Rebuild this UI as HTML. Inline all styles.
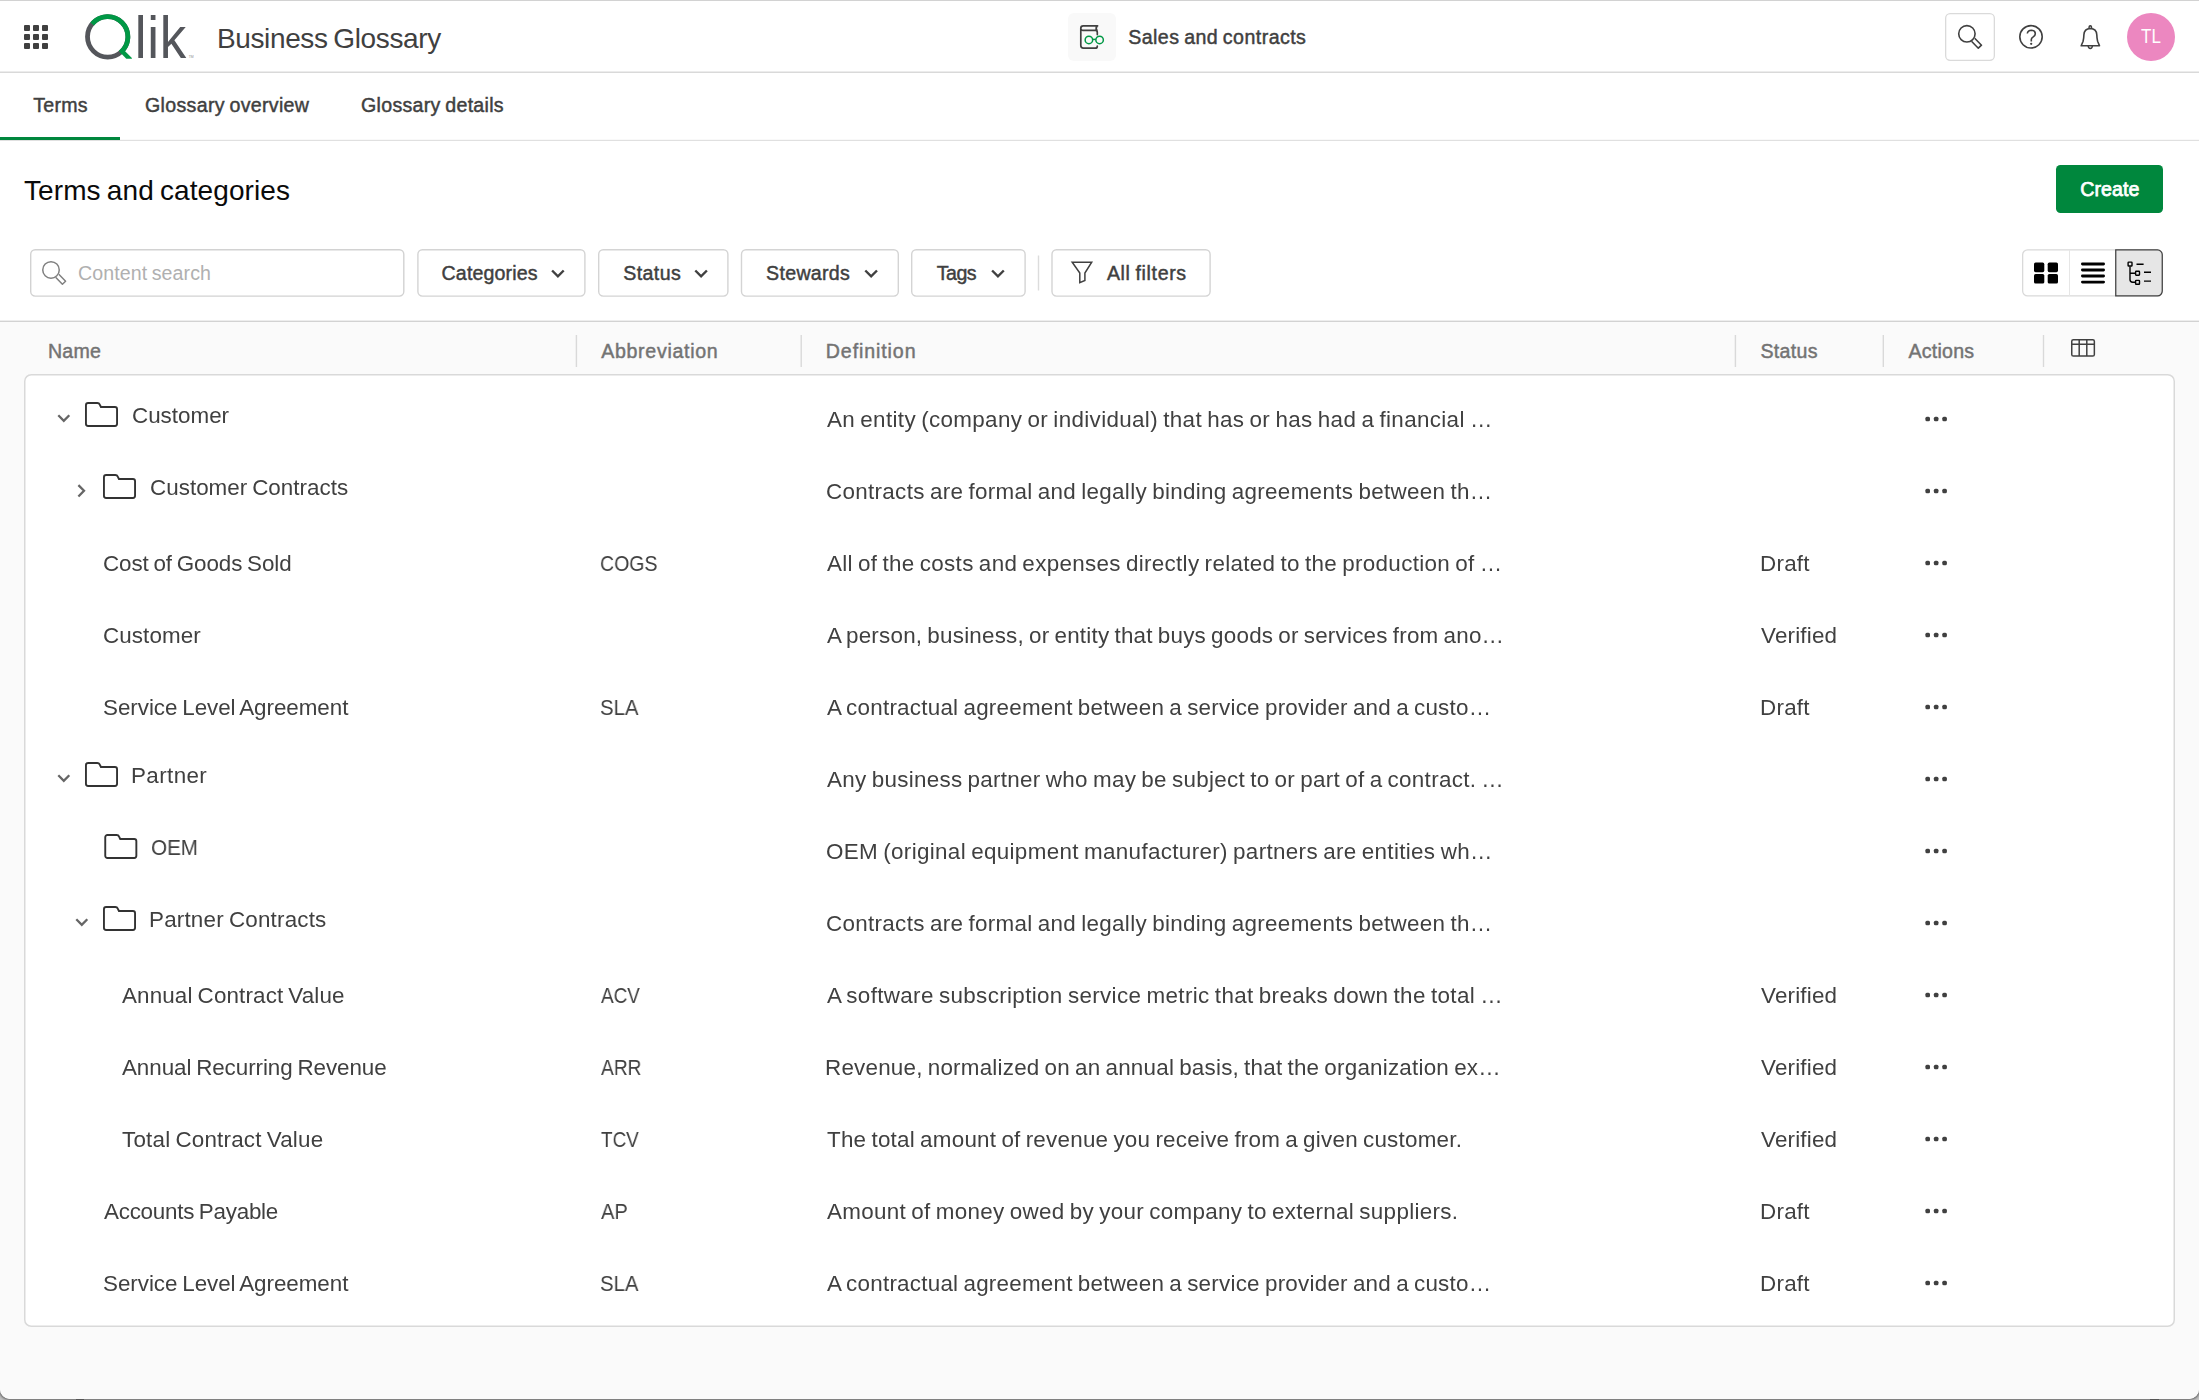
<!DOCTYPE html>
<html lang="en"><head><meta charset="utf-8"><title>Business Glossary</title>
<style>
html,body{margin:0;padding:0;}
body{width:2199px;height:1400px;overflow:hidden;background:#c2c2c2;font-family:'Liberation Sans',sans-serif;position:relative;}
#win{position:absolute;left:0;top:0;width:2199px;height:1398.5px;overflow:hidden;border-radius:0 0 10px 10px;background:#fafafa;box-shadow:0 0 2.5px 0.6px rgba(0,0,0,0.5);}
#bg{position:absolute;left:0;top:0;}
.t{position:absolute;line-height:40px;white-space:nowrap;}
.g{will-change:transform;}
#logo{position:absolute;left:0;top:0;}
</style></head><body>
<div id="win">
<svg id="bg" width="2199" height="1400" viewBox="0 0 2199 1400" role="img" aria-label="Qlik Business Glossary">
<rect x="0" y="0" width="2199" height="321" fill="#ffffff"/>
<rect x="0" y="321" width="2199" height="1079" fill="#fafafa"/>
<rect x="0" y="0" width="2199" height="1" fill="#d2d2d2"/>
<rect x="0" y="71.5" width="2199" height="1.5" fill="#d9d9d9"/>
<rect x="0" y="139.8" width="2199" height="1.1999999999999886" fill="#e0e0e0"/>
<rect x="0" y="137" width="120" height="3" fill="#00873d"/>
<rect x="0" y="320.6" width="2199" height="1.3999999999999773" fill="#d2d2d2"/>
<rect x="24" y="25" width="6" height="6" rx="1" fill="#404040"/>
<rect x="33" y="25" width="6" height="6" rx="1" fill="#404040"/>
<rect x="42" y="25" width="6" height="6" rx="1" fill="#404040"/>
<rect x="24" y="34" width="6" height="6" rx="1" fill="#404040"/>
<rect x="33" y="34" width="6" height="6" rx="1" fill="#404040"/>
<rect x="42" y="34" width="6" height="6" rx="1" fill="#404040"/>
<rect x="24" y="43" width="6" height="6" rx="1" fill="#404040"/>
<rect x="33" y="43" width="6" height="6" rx="1" fill="#404040"/>
<rect x="42" y="43" width="6" height="6" rx="1" fill="#404040"/>
<circle cx="107.7" cy="36.85" r="20.2" fill="none" stroke="#54565b" stroke-width="4.8"/>
<path d="M92.14 23.97 A20.2 20.2 0 1 1 120.41 52.55" fill="none" stroke="#009845" stroke-width="4.8"/>
<path d="M119.3 51.6 L124.9 51.1 L131.9 58.1 L131.9 58.8 L126.3 58.8 Z" fill="#009845"/>
<rect x="1068" y="13" width="48" height="48" rx="6" fill="#f9f9f9"/>
<path d="M1097.6 25.8 H1083.2 A2.4 2.4 0 0 0 1080.8 28.2 V45.6 A2.6 2.6 0 0 0 1083.4 48.2 H1095.3 A2 2 0 0 0 1097.3 46.2 M1080.8 28.2 A2.2 2.2 0 0 0 1083 30.4 H1095.3 A2 2 0 0 1 1097.3 32.4 V34.6 M1097.2 25.9 Q1095.2 28.1 1097 30.6" fill="none" stroke="#404040" stroke-width="1.7" stroke-linecap="round"/>
<circle cx="1088.9" cy="39.9" r="3.75" fill="none" stroke="#009845" stroke-width="1.5"/><circle cx="1099.6" cy="39.9" r="3.75" fill="none" stroke="#009845" stroke-width="1.5"/><path d="M1092.7 39.4 H1095.8" stroke="#009845" stroke-width="1.5"/>
<rect x="1945.65" y="13.65" width="48.70" height="46.70" rx="4.5" fill="#ffffff" stroke="#dadada" stroke-width="1.3"/>
<circle cx="1966.9" cy="33.8" r="8.2" fill="none" stroke="#404040" stroke-width="1.6"/>
<path d="M1971.5 41.199999999999996 L1978.3000000000002 48.199999999999996 L1981.5 45.199999999999996 L1974.7 38.199999999999996" fill="none" stroke="#404040" stroke-width="1.6" stroke-linejoin="round"/>
<circle cx="2031" cy="36.8" r="11.2" fill="none" stroke="#404040" stroke-width="1.6"/>
<path d="M2027.3 33.5 Q2027.8 30.2 2031.4 30.2 Q2035.3 30.3 2035.3 33.7 Q2035.3 35.5 2033.2 36.9 Q2031.3 38.1 2031.3 39.6 V41.4" fill="none" stroke="#404040" stroke-width="1.6"/><circle cx="2031.2" cy="43.8" r="1.15" fill="#404040"/>
<path d="M2081.2 45.7 H2099.5 L2097.6 41.2 Q2096.9 38.5 2096.8 34.8 Q2096.5 28.6 2090.35 28.5 Q2084.2 28.6 2083.9 34.8 Q2083.8 38.5 2083.1 41.2 Z" fill="none" stroke="#404040" stroke-width="1.6" stroke-linejoin="round"/>
<path d="M2089 28.4 Q2089 25.7 2090.3 25.7 Q2091.6 25.7 2091.6 28.4 M2088.2 46 Q2088.4 48.4 2090.3 48.4 Q2092.2 48.4 2092.4 46" fill="none" stroke="#404040" stroke-width="1.5"/>
<circle cx="2151" cy="37" r="24" fill="#ec87c0"/>
<rect x="2056" y="165" width="107" height="48" rx="4.5" fill="#00873d"/>
<rect x="30.70" y="249.70" width="373.10" height="46.40" rx="4.5" fill="#ffffff" stroke="#d2d2d2" stroke-width="1.4"/>
<circle cx="51" cy="269.9" r="8.25" fill="none" stroke="#808080" stroke-width="1.5"/>
<path d="M55.6 277.29999999999995 L62.4 284.29999999999995 L65.6 281.29999999999995 L58.8 274.29999999999995" fill="none" stroke="#808080" stroke-width="1.5" stroke-linejoin="round"/>
<rect x="417.90" y="249.70" width="167.00" height="46.40" rx="4.5" fill="#ffffff" stroke="#d4d4d4" stroke-width="1.4"/>
<path d="M552.10 270.50 L557.90 276.30 L563.70 270.50" fill="none" stroke="#404040" stroke-width="2.4"/>
<rect x="598.70" y="249.70" width="129.20" height="46.40" rx="4.5" fill="#ffffff" stroke="#d4d4d4" stroke-width="1.4"/>
<path d="M695.30 270.50 L701.10 276.30 L706.90 270.50" fill="none" stroke="#404040" stroke-width="2.4"/>
<rect x="741.50" y="249.70" width="156.80" height="46.40" rx="4.5" fill="#ffffff" stroke="#d4d4d4" stroke-width="1.4"/>
<path d="M865.30 270.50 L871.15 276.35 L877.00 270.50" fill="none" stroke="#404040" stroke-width="2.4"/>
<rect x="911.70" y="249.70" width="113.40" height="46.40" rx="4.5" fill="#ffffff" stroke="#d4d4d4" stroke-width="1.4"/>
<path d="M992.10 270.50 L997.95 276.35 L1003.80 270.50" fill="none" stroke="#404040" stroke-width="2.4"/>
<rect x="1037.8" y="255.5" width="1.400000000000091" height="35.0" fill="#dcdcdc"/>
<rect x="1052.00" y="249.70" width="158.10" height="46.40" rx="4.5" fill="#ffffff" stroke="#d4d4d4" stroke-width="1.4"/>
<path d="M1072.2 262.2 H1091.7 L1084.9 273 V280.5 L1079.8 282.7 V273 Z" fill="none" stroke="#404040" stroke-width="1.5" stroke-linejoin="miter"/>
<rect x="2022.65" y="249.85" width="139.70" height="46.10" rx="5" fill="#ffffff" stroke="#d9d9d9" stroke-width="1.3"/>
<rect x="2069" y="250" width="1" height="46" fill="#e6e6e6"/>
<path d="M2115.75 249.95 H2157.5 A4.75 4.75 0 0 1 2162.25 254.7 V291.1 A4.75 4.75 0 0 1 2157.5 295.85 H2115.75 Z" fill="#e6e6e6" stroke="#404040" stroke-width="1.25"/>
<rect x="2034" y="262.6" width="10.3" height="9.6" rx="1.6" fill="#000"/>
<rect x="2047.7" y="262.6" width="10.3" height="9.6" rx="1.6" fill="#000"/>
<rect x="2034" y="273.9" width="10.3" height="9.6" rx="1.6" fill="#000"/>
<rect x="2047.7" y="273.9" width="10.3" height="9.6" rx="1.6" fill="#000"/>
<path d="M2082.4 264 H2103.6" stroke="#000" stroke-width="2.8" stroke-linecap="round"/>
<path d="M2082.4 270 H2103.6" stroke="#000" stroke-width="2.8" stroke-linecap="round"/>
<path d="M2082.4 276 H2103.6" stroke="#000" stroke-width="2.8" stroke-linecap="round"/>
<path d="M2082.4 282.1 H2103.6" stroke="#000" stroke-width="2.8" stroke-linecap="round"/>
<g fill="none" stroke="#000" stroke-width="1.4"><rect x="2128.1" y="262.1" width="3.9" height="3.9" rx="0.6"/><rect x="2135.6" y="271.3" width="3.9" height="3.9" rx="0.6"/><rect x="2135.6" y="280.4" width="3.9" height="3.9" rx="0.6"/><path d="M2130 266.4 V279.6 Q2130 282.3 2132.7 282.3 H2135.2 M2130 273.2 H2135.2"/><path d="M2136.5 264.2 H2143.6 M2144 272.3 H2151 M2144 281.1 H2151"/></g>
<rect x="575.6999999999999" y="335" width="1.400000000000091" height="32" fill="#d9d9d9"/>
<rect x="800.5" y="335" width="1.400000000000091" height="32" fill="#d9d9d9"/>
<rect x="1734.7" y="335" width="1.400000000000091" height="32" fill="#d9d9d9"/>
<rect x="1882.6" y="335" width="1.400000000000091" height="32" fill="#d9d9d9"/>
<rect x="2042.8" y="335" width="1.400000000000091" height="32" fill="#d9d9d9"/>
<g fill="none" stroke="#404040" stroke-width="1.5"><rect x="2071.75" y="339.75" width="22.6" height="16.3" rx="1.6"/><path d="M2071.75 344.2 H2094.3 M2079.2 339.8 V356 M2086.8 339.8 V356"/></g>
<rect x="24.75" y="374.75" width="2149.50" height="951.50" rx="6.5" fill="#ffffff" stroke="#d9d9d9" stroke-width="1.5"/>
<rect x="1925.4" y="416.7" width="4.6" height="4.6" rx="1.5" fill="#404040"/>
<rect x="1933.8500000000001" y="416.7" width="4.6" height="4.6" rx="1.5" fill="#404040"/>
<rect x="1942.3" y="416.7" width="4.6" height="4.6" rx="1.5" fill="#404040"/>
<path d="M58.300000000000004 415.3 L63.800000000000004 420.9 L69.3 415.3" fill="none" stroke="#666" stroke-width="2.3"/>
<path d="M85.95 405.2 A2.2 2.2 0 0 1 88.15 403 H97.3 Q99.1 403 99.8 404.7 L100.9 407 H114.9 A2.2 2.2 0 0 1 117.05 409.2 V423.8 A2.2 2.2 0 0 1 114.9 426 H88.15 A2.2 2.2 0 0 1 85.95 423.8 Z" fill="none" stroke="#333" stroke-width="1.9" stroke-linejoin="round"/>
<rect x="1925.4" y="488.7" width="4.6" height="4.6" rx="1.5" fill="#404040"/>
<rect x="1933.8500000000001" y="488.7" width="4.6" height="4.6" rx="1.5" fill="#404040"/>
<rect x="1942.3" y="488.7" width="4.6" height="4.6" rx="1.5" fill="#404040"/>
<path d="M78.39999999999999 485.09999999999997 L84.0 490.79999999999995 L78.39999999999999 496.5" fill="none" stroke="#666" stroke-width="2.3"/>
<path d="M103.95 477.2 A2.2 2.2 0 0 1 106.15 475 H115.3 Q117.1 475 117.8 476.7 L118.9 479 H132.9 A2.2 2.2 0 0 1 135.05 481.2 V495.8 A2.2 2.2 0 0 1 132.9 498 H106.15 A2.2 2.2 0 0 1 103.95 495.8 Z" fill="none" stroke="#333" stroke-width="1.9" stroke-linejoin="round"/>
<rect x="1925.4" y="560.7" width="4.6" height="4.6" rx="1.5" fill="#404040"/>
<rect x="1933.8500000000001" y="560.7" width="4.6" height="4.6" rx="1.5" fill="#404040"/>
<rect x="1942.3" y="560.7" width="4.6" height="4.6" rx="1.5" fill="#404040"/>
<rect x="1925.4" y="632.7" width="4.6" height="4.6" rx="1.5" fill="#404040"/>
<rect x="1933.8500000000001" y="632.7" width="4.6" height="4.6" rx="1.5" fill="#404040"/>
<rect x="1942.3" y="632.7" width="4.6" height="4.6" rx="1.5" fill="#404040"/>
<rect x="1925.4" y="704.7" width="4.6" height="4.6" rx="1.5" fill="#404040"/>
<rect x="1933.8500000000001" y="704.7" width="4.6" height="4.6" rx="1.5" fill="#404040"/>
<rect x="1942.3" y="704.7" width="4.6" height="4.6" rx="1.5" fill="#404040"/>
<rect x="1925.4" y="776.7" width="4.6" height="4.6" rx="1.5" fill="#404040"/>
<rect x="1933.8500000000001" y="776.7" width="4.6" height="4.6" rx="1.5" fill="#404040"/>
<rect x="1942.3" y="776.7" width="4.6" height="4.6" rx="1.5" fill="#404040"/>
<path d="M58.300000000000004 775.3 L63.800000000000004 780.9 L69.3 775.3" fill="none" stroke="#666" stroke-width="2.3"/>
<path d="M85.95 765.2 A2.2 2.2 0 0 1 88.15 763 H97.3 Q99.1 763 99.8 764.7 L100.9 767 H114.9 A2.2 2.2 0 0 1 117.05 769.2 V783.8 A2.2 2.2 0 0 1 114.9 786 H88.15 A2.2 2.2 0 0 1 85.95 783.8 Z" fill="none" stroke="#333" stroke-width="1.9" stroke-linejoin="round"/>
<rect x="1925.4" y="848.7" width="4.6" height="4.6" rx="1.5" fill="#404040"/>
<rect x="1933.8500000000001" y="848.7" width="4.6" height="4.6" rx="1.5" fill="#404040"/>
<rect x="1942.3" y="848.7" width="4.6" height="4.6" rx="1.5" fill="#404040"/>
<path d="M105.25 837.2 A2.2 2.2 0 0 1 107.45 835 H116.6 Q118.39999999999999 835 119.1 836.7 L120.2 839 H134.2 A2.2 2.2 0 0 1 136.35 841.2 V855.8 A2.2 2.2 0 0 1 134.2 858 H107.45 A2.2 2.2 0 0 1 105.25 855.8 Z" fill="none" stroke="#333" stroke-width="1.9" stroke-linejoin="round"/>
<rect x="1925.4" y="920.7" width="4.6" height="4.6" rx="1.5" fill="#404040"/>
<rect x="1933.8500000000001" y="920.7" width="4.6" height="4.6" rx="1.5" fill="#404040"/>
<rect x="1942.3" y="920.7" width="4.6" height="4.6" rx="1.5" fill="#404040"/>
<path d="M76.3 919.3 L81.8 924.9 L87.3 919.3" fill="none" stroke="#666" stroke-width="2.3"/>
<path d="M103.95 909.2 A2.2 2.2 0 0 1 106.15 907 H115.3 Q117.1 907 117.8 908.7 L118.9 911 H132.9 A2.2 2.2 0 0 1 135.05 913.2 V927.8 A2.2 2.2 0 0 1 132.9 930 H106.15 A2.2 2.2 0 0 1 103.95 927.8 Z" fill="none" stroke="#333" stroke-width="1.9" stroke-linejoin="round"/>
<rect x="1925.4" y="992.7" width="4.6" height="4.6" rx="1.5" fill="#404040"/>
<rect x="1933.8500000000001" y="992.7" width="4.6" height="4.6" rx="1.5" fill="#404040"/>
<rect x="1942.3" y="992.7" width="4.6" height="4.6" rx="1.5" fill="#404040"/>
<rect x="1925.4" y="1064.7" width="4.6" height="4.6" rx="1.5" fill="#404040"/>
<rect x="1933.8500000000001" y="1064.7" width="4.6" height="4.6" rx="1.5" fill="#404040"/>
<rect x="1942.3" y="1064.7" width="4.6" height="4.6" rx="1.5" fill="#404040"/>
<rect x="1925.4" y="1136.7" width="4.6" height="4.6" rx="1.5" fill="#404040"/>
<rect x="1933.8500000000001" y="1136.7" width="4.6" height="4.6" rx="1.5" fill="#404040"/>
<rect x="1942.3" y="1136.7" width="4.6" height="4.6" rx="1.5" fill="#404040"/>
<rect x="1925.4" y="1208.7" width="4.6" height="4.6" rx="1.5" fill="#404040"/>
<rect x="1933.8500000000001" y="1208.7" width="4.6" height="4.6" rx="1.5" fill="#404040"/>
<rect x="1942.3" y="1208.7" width="4.6" height="4.6" rx="1.5" fill="#404040"/>
<rect x="1925.4" y="1280.7" width="4.6" height="4.6" rx="1.5" fill="#404040"/>
<rect x="1933.8500000000001" y="1280.7" width="4.6" height="4.6" rx="1.5" fill="#404040"/>
<rect x="1942.3" y="1280.7" width="4.6" height="4.6" rx="1.5" fill="#404040"/>
<text transform="scale(1,1.12)" x="134.8" y="51.70" font-family="'Liberation Sans',sans-serif" font-size="53" fill="#54565b" letter-spacing="0.75">lik</text>
<text x="188.8" y="58.2" font-family="'Liberation Sans',sans-serif" font-size="3.4" fill="#8a8b8e">TM</text>
</svg>
<div class="t" style="left:217.0px;top:18.5px;color:#404040;font-size:28px;word-spacing:-0.06em;letter-spacing:-0.375px;">Business Glossary</div>
<div class="t" style="left:1128.2px;top:16.7px;color:#404040;font-size:19.6px;word-spacing:-0.06em;letter-spacing:0.444px;-webkit-text-stroke:0.45px;">Sales and contracts</div>
<div class="t" style="left:2141.2px;top:16.1px;color:#ffffff;font-size:19.6px;transform:scaleX(0.8675);transform-origin:0 0;">TL</div>
<div class="t" style="left:33.2px;top:85.0px;color:#404040;font-size:19.6px;letter-spacing:0.250px;-webkit-text-stroke:0.45px;">Terms</div>
<div class="t" style="left:145.0px;top:85.0px;color:#404040;font-size:19.6px;word-spacing:-0.06em;letter-spacing:0.317px;-webkit-text-stroke:0.45px;">Glossary overview</div>
<div class="t" style="left:361.0px;top:85.0px;color:#404040;font-size:19.6px;word-spacing:-0.06em;letter-spacing:0.297px;-webkit-text-stroke:0.45px;">Glossary details</div>
<div class="t" style="left:24.0px;top:171.0px;color:#0a0a0a;font-size:28px;word-spacing:-0.06em;letter-spacing:0.085px;">Terms and categories</div>
<div class="t" style="left:78.1px;top:252.8px;color:#b0b0b0;font-size:19.6px;word-spacing:-0.06em;letter-spacing:0.089px;">Content search</div>
<div class="t" style="left:441.6px;top:252.6px;color:#404040;font-size:19.6px;letter-spacing:0.129px;-webkit-text-stroke:0.45px;">Categories</div>
<div class="t" style="left:623.2px;top:252.6px;color:#404040;font-size:19.6px;letter-spacing:0.400px;-webkit-text-stroke:0.45px;">Status</div>
<div class="t" style="left:766.1px;top:252.6px;color:#404040;font-size:19.6px;letter-spacing:0.297px;-webkit-text-stroke:0.45px;">Stewards</div>
<div class="t" style="left:936.8px;top:252.6px;color:#404040;font-size:19.6px;letter-spacing:-0.540px;-webkit-text-stroke:0.45px;">Tags</div>
<div class="t" style="left:1106.9px;top:252.6px;color:#404040;font-size:19.6px;word-spacing:-0.06em;letter-spacing:0.639px;-webkit-text-stroke:0.45px;">All filters</div>
<div class="t" style="left:2080.2px;top:168.7px;color:#ffffff;font-size:19.6px;letter-spacing:0.078px;-webkit-text-stroke:0.75px;">Create</div>
<div class="t" style="left:48.0px;top:330.7px;color:#737373;font-size:19.6px;letter-spacing:0.207px;-webkit-text-stroke:0.45px;">Name</div>
<div class="t" style="left:601.2px;top:330.7px;color:#737373;font-size:19.6px;letter-spacing:0.685px;-webkit-text-stroke:0.45px;">Abbreviation</div>
<div class="t" style="left:825.8px;top:330.7px;color:#737373;font-size:19.6px;letter-spacing:0.898px;-webkit-text-stroke:0.45px;">Definition</div>
<div class="t" style="left:1760.5px;top:330.7px;color:#737373;font-size:19.6px;letter-spacing:0.292px;-webkit-text-stroke:0.45px;">Status</div>
<div class="t" style="left:1908.5px;top:330.7px;color:#737373;font-size:19.6px;letter-spacing:0.230px;-webkit-text-stroke:0.45px;">Actions</div>
<div class="t g" style="left:132.4px;top:396.0px;color:#404040;font-size:22.4px;">Customer</div>
<div class="t g" style="left:826.7px;top:400.0px;color:#404040;font-size:22.4px;word-spacing:-0.06em;letter-spacing:0.350px;">An entity (company or individual) that has or has had a financial …</div>
<div class="t g" style="left:150.4px;top:468.0px;color:#404040;font-size:22.4px;word-spacing:-0.06em;letter-spacing:0.022px;">Customer Contracts</div>
<div class="t g" style="left:825.7px;top:472.0px;color:#404040;font-size:22.4px;word-spacing:-0.06em;letter-spacing:0.319px;">Contracts are formal and legally binding agreements between th…</div>
<div class="t g" style="left:103.4px;top:543.7px;color:#404040;font-size:22.4px;word-spacing:-0.06em;letter-spacing:-0.086px;">Cost of Goods Sold</div>
<div class="t g" style="left:600.2px;top:543.7px;color:#404040;font-size:22.4px;transform:scaleX(0.8715);transform-origin:0 0;">COGS</div>
<div class="t g" style="left:826.7px;top:544.0px;color:#404040;font-size:22.4px;word-spacing:-0.06em;letter-spacing:0.318px;">All of the costs and expenses directly related to the production of …</div>
<div class="t g" style="left:1759.5px;top:543.7px;color:#404040;font-size:22.4px;letter-spacing:0.250px;">Draft</div>
<div class="t g" style="left:103.4px;top:615.7px;color:#404040;font-size:22.4px;letter-spacing:0.089px;">Customer</div>
<div class="t g" style="left:826.7px;top:616.0px;color:#404040;font-size:22.4px;word-spacing:-0.06em;letter-spacing:0.223px;">A person, business, or entity that buys goods or services from ano…</div>
<div class="t g" style="left:1760.8px;top:615.7px;color:#404040;font-size:22.4px;letter-spacing:0.197px;">Verified</div>
<div class="t g" style="left:103.4px;top:687.7px;color:#404040;font-size:22.4px;word-spacing:-0.06em;letter-spacing:-0.039px;">Service Level Agreement</div>
<div class="t g" style="left:600.2px;top:687.7px;color:#404040;font-size:22.4px;transform:scaleX(0.9082);transform-origin:0 0;">SLA</div>
<div class="t g" style="left:826.7px;top:688.0px;color:#404040;font-size:22.4px;word-spacing:-0.06em;letter-spacing:0.247px;">A contractual agreement between a service provider and a custo…</div>
<div class="t g" style="left:1759.5px;top:687.7px;color:#404040;font-size:22.4px;letter-spacing:0.250px;">Draft</div>
<div class="t g" style="left:131.4px;top:756.0px;color:#404040;font-size:22.4px;letter-spacing:0.397px;">Partner</div>
<div class="t g" style="left:826.7px;top:760.0px;color:#404040;font-size:22.4px;word-spacing:-0.06em;letter-spacing:0.298px;">Any business partner who may be subject to or part of a contract. …</div>
<div class="t g" style="left:151.4px;top:828.0px;color:#404040;font-size:22.4px;transform:scaleX(0.9216);transform-origin:0 0;">OEM</div>
<div class="t g" style="left:825.7px;top:832.0px;color:#404040;font-size:22.4px;word-spacing:-0.06em;letter-spacing:0.341px;">OEM (original equipment manufacturer) partners are entities wh…</div>
<div class="t g" style="left:149.4px;top:900.0px;color:#404040;font-size:22.4px;word-spacing:-0.06em;letter-spacing:0.198px;">Partner Contracts</div>
<div class="t g" style="left:825.7px;top:904.0px;color:#404040;font-size:22.4px;word-spacing:-0.06em;letter-spacing:0.319px;">Contracts are formal and legally binding agreements between th…</div>
<div class="t g" style="left:122.0px;top:975.7px;color:#404040;font-size:22.4px;word-spacing:-0.06em;letter-spacing:0.142px;">Annual Contract Value</div>
<div class="t g" style="left:601.2px;top:975.7px;color:#404040;font-size:22.4px;transform:scaleX(0.8448);transform-origin:0 0;">ACV</div>
<div class="t g" style="left:826.7px;top:976.0px;color:#404040;font-size:22.4px;word-spacing:-0.06em;letter-spacing:0.353px;">A software subscription service metric that breaks down the total …</div>
<div class="t g" style="left:1760.8px;top:975.7px;color:#404040;font-size:22.4px;letter-spacing:0.197px;">Verified</div>
<div class="t g" style="left:122.0px;top:1047.7px;color:#404040;font-size:22.4px;word-spacing:-0.06em;letter-spacing:-0.067px;">Annual Recurring Revenue</div>
<div class="t g" style="left:601.2px;top:1047.7px;color:#404040;font-size:22.4px;transform:scaleX(0.8562);transform-origin:0 0;">ARR</div>
<div class="t g" style="left:824.7px;top:1048.0px;color:#404040;font-size:22.4px;word-spacing:-0.06em;letter-spacing:0.224px;">Revenue, normalized on an annual basis, that the organization ex…</div>
<div class="t g" style="left:1760.8px;top:1047.7px;color:#404040;font-size:22.4px;letter-spacing:0.197px;">Verified</div>
<div class="t g" style="left:122.0px;top:1119.7px;color:#404040;font-size:22.4px;word-spacing:-0.06em;letter-spacing:0.202px;">Total Contract Value</div>
<div class="t g" style="left:601.2px;top:1119.7px;color:#404040;font-size:22.4px;transform:scaleX(0.8444);transform-origin:0 0;">TCV</div>
<div class="t g" style="left:826.7px;top:1120.0px;color:#404040;font-size:22.4px;word-spacing:-0.06em;letter-spacing:0.245px;">The total amount of revenue you receive from a given customer.</div>
<div class="t g" style="left:1760.8px;top:1119.7px;color:#404040;font-size:22.4px;letter-spacing:0.197px;">Verified</div>
<div class="t g" style="left:104.4px;top:1191.7px;color:#404040;font-size:22.4px;word-spacing:-0.06em;letter-spacing:-0.241px;">Accounts Payable</div>
<div class="t g" style="left:601.2px;top:1191.7px;color:#404040;font-size:22.4px;transform:scaleX(0.8966);transform-origin:0 0;">AP</div>
<div class="t g" style="left:826.7px;top:1192.0px;color:#404040;font-size:22.4px;word-spacing:-0.06em;letter-spacing:0.316px;">Amount of money owed by your company to external suppliers.</div>
<div class="t g" style="left:1759.5px;top:1191.7px;color:#404040;font-size:22.4px;letter-spacing:0.250px;">Draft</div>
<div class="t g" style="left:103.4px;top:1263.7px;color:#404040;font-size:22.4px;word-spacing:-0.06em;letter-spacing:-0.039px;">Service Level Agreement</div>
<div class="t g" style="left:600.2px;top:1263.7px;color:#404040;font-size:22.4px;transform:scaleX(0.9082);transform-origin:0 0;">SLA</div>
<div class="t g" style="left:826.7px;top:1264.0px;color:#404040;font-size:22.4px;word-spacing:-0.06em;letter-spacing:0.247px;">A contractual agreement between a service provider and a custo…</div>
<div class="t g" style="left:1759.5px;top:1263.7px;color:#404040;font-size:22.4px;letter-spacing:0.250px;">Draft</div>
</div>
<div style="position:absolute;left:76px;top:1399px;width:8px;height:1px;background:#555"></div><div style="position:absolute;left:2150px;top:1399px;width:9px;height:1px;background:#555"></div>
</body></html>
